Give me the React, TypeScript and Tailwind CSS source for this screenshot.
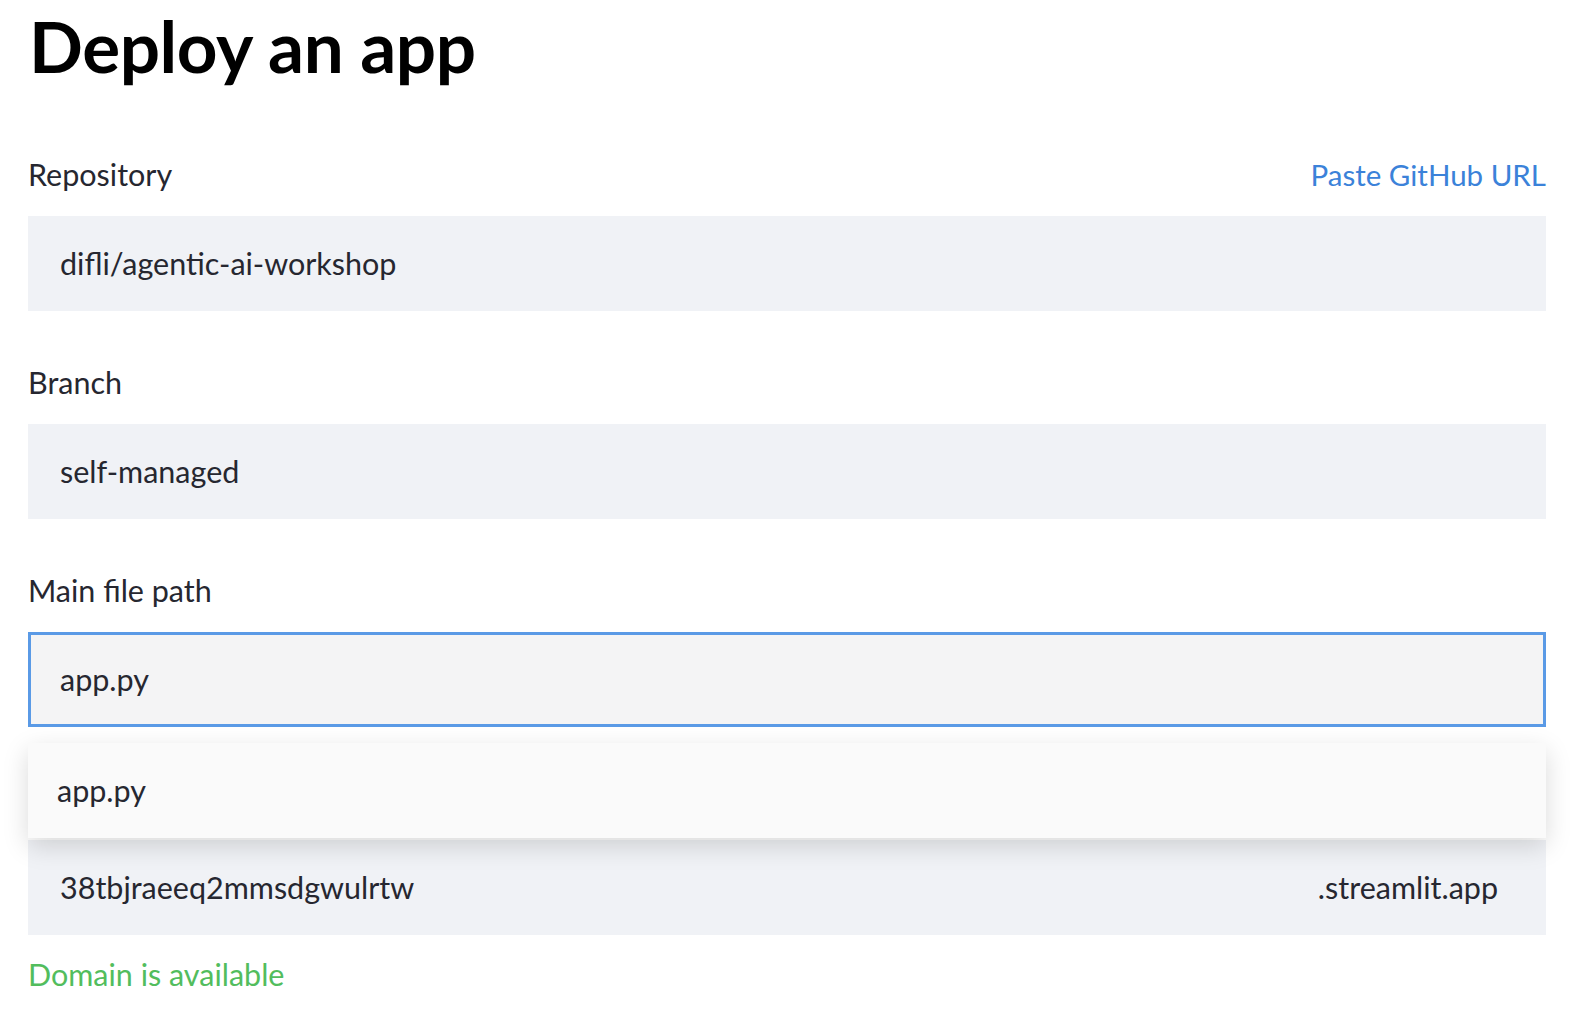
import React from "react";

const font = { fontFamily: "Lato, 'Noto Sans', sans-serif" };

function Label({ children, right }: { children: React.ReactNode; right?: React.ReactNode }) {
  return (
    <div className="flex h-[48px] items-center justify-between text-[30.5px] text-[#262730]">
      <span>{children}</span>
      {right}
    </div>
  );
}

export default function App() {
  return (
    <div className="min-h-[1016px] bg-white" style={font}>
      <div className="pl-[28px] pr-[24px]">
        <h1 className="flex h-[96px] items-center pb-[6px] pl-[1px] text-[71px] font-bold leading-none tracking-[-0.4px] text-black">
          Deploy an app
        </h1>

        <div className="mt-[55px]">
          <Label right={<a className="cursor-pointer text-[29.5px] text-[#3b82d9]">Paste GitHub URL</a>}>Repository</Label>
          <div className="mt-[17px] flex h-[95px] items-center bg-[#f0f2f6] px-[32px] text-[30.5px] text-[#262730]">
            difli/agentic-ai-workshop
          </div>
        </div>

        <div className="mt-[48px]">
          <Label>Branch</Label>
          <div className="mt-[17px] flex h-[95px] items-center bg-[#f0f2f6] px-[32px] text-[30.5px] text-[#262730]">
            self-managed
          </div>
        </div>

        <div className="relative mt-[48px]">
          <Label>Main file path</Label>
          <div className="mt-[17px] flex h-[95px] items-center border-[3px] border-[#5a9ae6] bg-[#f4f4f5] px-[29px] text-[30.5px] text-[#262730]">
            app.py
          </div>
          <div className="absolute left-0 right-0 top-[176px] z-10 flex h-[95px] items-center bg-[#fafafa] px-[29px] text-[30.5px] text-[#262730] shadow-[0_8px_24px_rgba(0,0,0,0.15)]">
            app.py
          </div>
        </div>

        <div className="mt-[48px]">
          <div className="h-[48px]" />
          <div className="mt-[17px] flex h-[95px] items-center justify-between bg-[#f0f2f6] pl-[32px] pr-[48px] text-[30.5px] text-[#262730]">
            <span>38tbjraeeq2mmsdgwulrtw</span>
            <span>.streamlit.app</span>
          </div>
          <div className="flex h-[80px] items-center text-[30.5px] text-[#52bd5d]">Domain is available</div>
        </div>
      </div>
      <div className="h-[18px] bg-gradient-to-b from-white to-[#f9f9f9]" />
    </div>
  );
}
